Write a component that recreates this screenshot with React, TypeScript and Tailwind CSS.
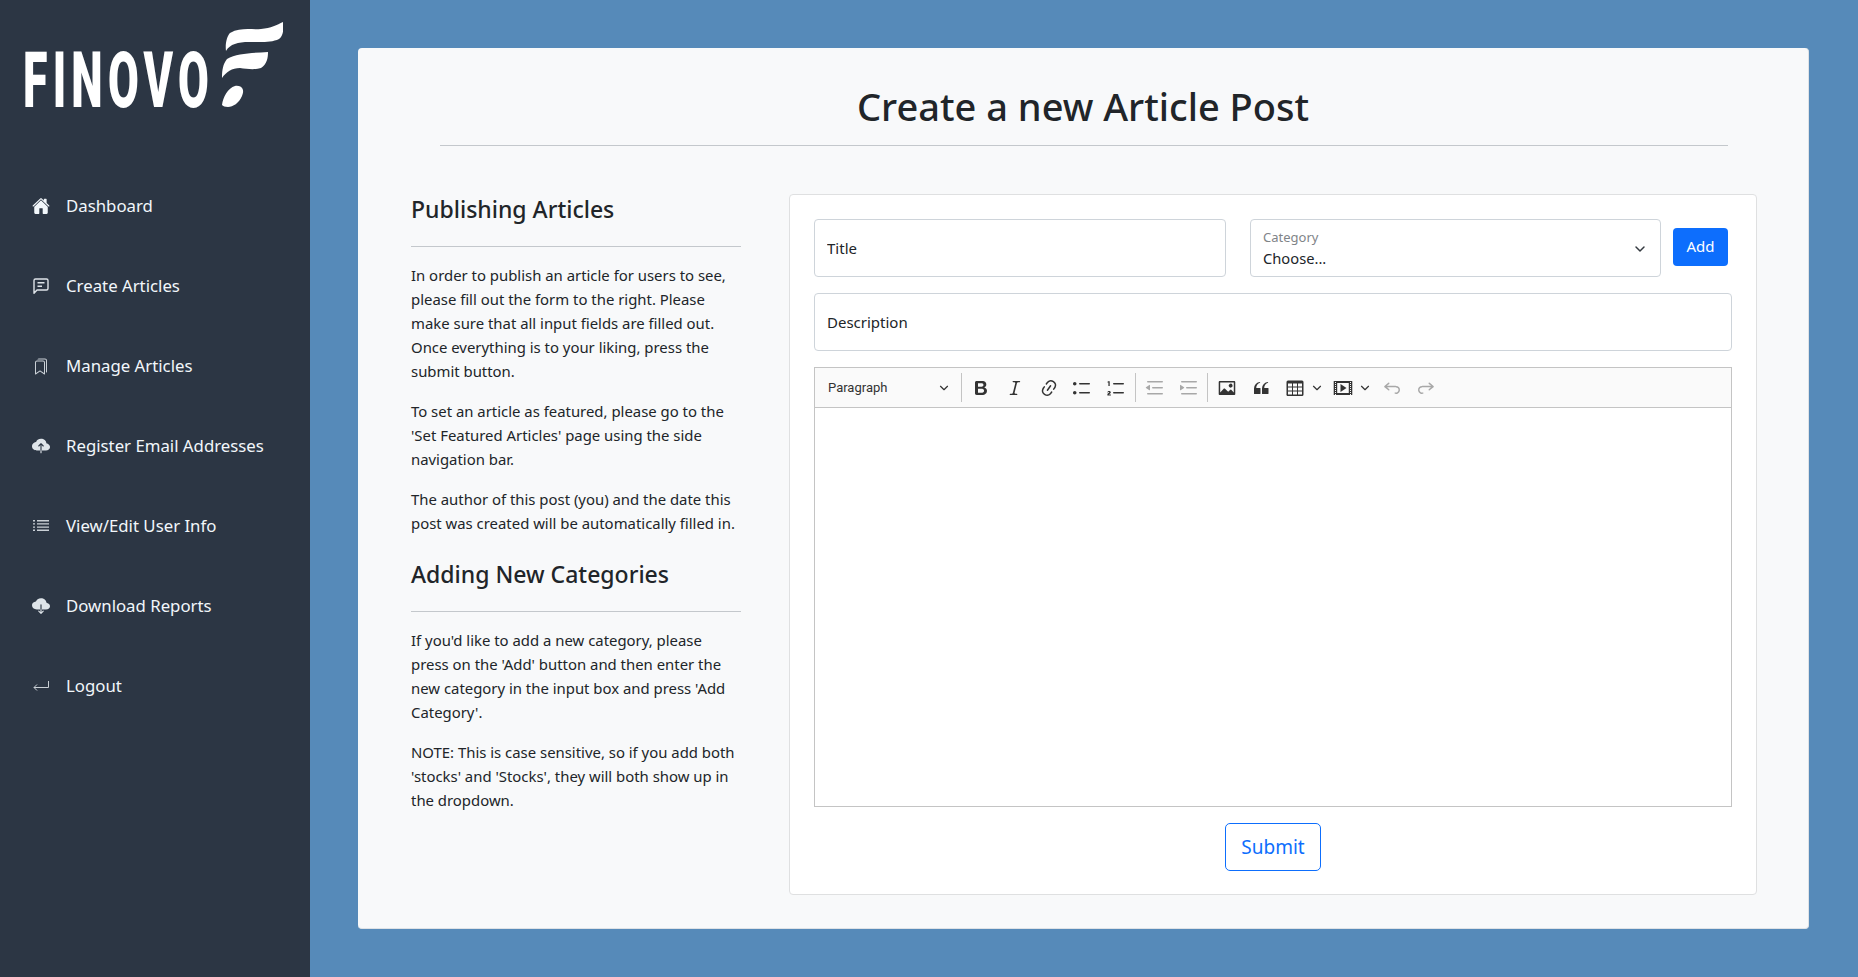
import { ChevronDown } from 'lucide-react';
import { IoHome, IoCloudUpload, IoCloudDownload } from 'react-icons/io5';
import { BsBookmarks } from 'react-icons/bs';

const font = "font-['Noto_Sans','Open_Sans',sans-serif]";

function Glyph({ d, className = '' }: { d: string; className?: string }) {
  return (
    <svg viewBox="0 0 20 20" fill="currentColor" className={`h-5 w-5 ${className}`}>
      <path d={d} />
    </svg>
  );
}

const ICONS = {
  bold: 'M10.187 17H5.773c-.637 0-1.092-.138-1.364-.415-.273-.277-.409-.718-.409-1.323V4.738c0-.617.14-1.062.419-1.332.279-.27.73-.406 1.354-.406h4.68c.69 0 1.288.041 1.793.124.506.083.96.242 1.36.478.341.197.644.447.906.75a3.262 3.262 0 0 1 .808 2.162c0 1.401-.722 2.426-2.167 3.075C15.05 10.175 16 11.315 16 13.01a3.756 3.756 0 0 1-2.296 3.504 6.1 6.1 0 0 1-1.517.377c-.571.073-1.238.11-2 .11zm-.217-6.217H7v4.087h3.069c1.977 0 2.965-.69 2.965-2.072 0-.707-.256-1.22-.768-1.537-.512-.319-1.277-.478-2.296-.478zM7 5.13v3.619h2.606c.729 0 1.292-.067 1.69-.2a1.6 1.6 0 0 0 .91-.765c.165-.267.247-.566.247-.897 0-.707-.26-1.176-.778-1.409-.519-.232-1.31-.348-2.375-.348H7z',
  italic: 'm9.586 14.633.021.004c-.036.335.095.655.393.962.082.083.173.15.274.201h1.474a.6.6 0 1 1 0 1.2H5.304a.6.6 0 0 1 0-1.2h1.15c.474-.07.809-.182 1.005-.334.157-.122.291-.32.404-.597l2.416-9.55a1.053 1.053 0 0 0-.281-.823 1.12 1.12 0 0 0-.442-.296H8.15a.6.6 0 0 1 0-1.2h6.443a.6.6 0 1 1 0 1.2h-1.195c-.376.056-.65.155-.823.296-.215.175-.423.439-.623.79l-2.366 9.347z',
  link: 'm11.077 15 .991-1.416a.75.75 0 1 1 1.229.86l-1.148 1.64a.748.748 0 0 1-.217.206 5.251 5.251 0 0 1-8.503-5.955.741.741 0 0 1 .12-.274l1.147-1.639a.75.75 0 1 1 1.228.86L4.933 10.7l.006.003a3.75 3.75 0 0 0 6.132 4.294l.006.004zm5.494-5.335a.748.748 0 0 1-.12.274l-1.147 1.639a.75.75 0 1 1-1.228-.86l.86-1.23a3.75 3.75 0 0 0-6.144-4.301l-.86 1.229a.75.75 0 0 1-1.229-.86l1.148-1.64a.748.748 0 0 1 .217-.206 5.251 5.251 0 0 1 8.503 5.955zm-4.563-2.532a.75.75 0 0 1 .184 1.045l-3.155 4.505a.75.75 0 1 1-1.229-.86l3.155-4.506a.75.75 0 0 1 1.045-.184z',
  bullet: 'M6 5.75c0 .414.336.75.75.75h9.5a.75.75 0 1 0 0-1.5h-9.5a.75.75 0 0 0-.75.75zm-6 0C0 4.784.777 4 1.75 4c.966 0 1.75.777 1.75 1.75 0 .966-.777 1.75-1.75 1.75C.784 7.5 0 6.723 0 5.75zm6 9c0 .414.336.75.75.75h9.5a.75.75 0 1 0 0-1.5h-9.5a.75.75 0 0 0-.75.75zm-6 0c0-.966.777-1.75 1.75-1.75.966 0 1.75.777 1.75 1.75 0 .966-.777 1.75-1.75 1.75-.966 0-1.75-.777-1.75-1.75z',
  number: 'M6 5.75c0 .414.336.75.75.75h9.5a.75.75 0 1 0 0-1.5h-9.5a.75.75 0 0 0-.75.75zm0 9c0 .414.336.75.75.75h9.5a.75.75 0 1 0 0-1.5h-9.5a.75.75 0 0 0-.75.75zM1.2 3.2h1.5V8H1.4V4.4H.5v-.7c.4 0 .6-.2.7-.5zM.4 17.5v-1c0-.8.5-1.1 1.2-1.5.4-.2.6-.4.6-.7 0-.3-.2-.4-.5-.4-.4 0-.6.2-.6.6H.4c0-1 .7-1.5 1.7-1.5 1.1 0 1.7.6 1.7 1.3 0 .8-.5 1.2-1.2 1.6-.3.2-.5.3-.6.5h1.9v1.1H.4z',
  outdent: 'M2 3.75c0 .414.336.75.75.75h14.5a.75.75 0 1 0 0-1.5H2.75a.75.75 0 0 0-.75.75zm5 6c0 .414.336.75.75.75h9.5a.75.75 0 1 0 0-1.5h-9.5a.75.75 0 0 0-.75.75zM2.75 16.5h14.5a.75.75 0 1 0 0-1.5H2.75a.75.75 0 1 0 0 1.5zm1.618-9.55L.98 9.358a.4.4 0 0 0 .013.661l3.39 2.207A.4.4 0 0 0 5 11.892V7.275a.4.4 0 0 0-.632-.326z',
  indent: 'M2 3.75c0 .414.336.75.75.75h14.5a.75.75 0 1 0 0-1.5H2.75a.75.75 0 0 0-.75.75zm5 6c0 .414.336.75.75.75h9.5a.75.75 0 1 0 0-1.5h-9.5a.75.75 0 0 0-.75.75zM2.75 16.5h14.5a.75.75 0 1 0 0-1.5H2.75a.75.75 0 1 0 0 1.5zM1.632 6.95 5.02 9.358a.4.4 0 0 1-.013.661l-3.39 2.207A.4.4 0 0 1 1 11.892V7.275a.4.4 0 0 1 .632-.326z',
  image: 'M6.91 10.54c.26-.23.64-.21.88.03l3.36 3.14 2.23-2.06a.64.64 0 0 1 .87 0l2.52 2.97V4.5H3.2v10.12l3.71-4.08zm10.27-7.51c.6 0 1.09.47 1.09 1.05v11.84c0 .59-.49 1.06-1.09 1.06H2.79c-.6 0-1.09-.47-1.09-1.06V4.08c0-.58.49-1.05 1.1-1.05h14.38zm-5.22 5.56a1.96 1.96 0 1 1 3.4-1.96 1.96 1.96 0 0 1-3.4 1.96z',
  quote: 'M3 10.423a6.5 6.5 0 0 1 6.056-6.408l.038.67C6.448 5.423 5.354 7.663 5.22 10H9c.552 0 .5.432.5.986v4.511c0 .554-.448.503-1 .503h-5c-.552 0-.5-.449-.5-1.003v-4.574zm8 0a6.5 6.5 0 0 1 6.056-6.408l.038.67c-2.646.739-3.74 2.979-3.873 5.315H17c.552 0 .5.432.5.986v4.511c0 .554-.448.503-1 .503h-5c-.552 0-.5-.449-.5-1.003v-4.574z',
  table: 'M3 5.5v3h4v-3H3zm0 4v3h4v-3H3zm0 4v3h4v-3H3zm5 3h4v-3H8v3zm5 0h4v-3h-4v3zm4-4v-3h-4v3h4zm0-4v-3h-4v3h4zm1.5 8a1.5 1.5 0 0 1-1.5 1.5H3A1.5 1.5 0 0 1 1.5 16V4A1.5 1.5 0 0 1 3 2.5h14A1.5 1.5 0 0 1 18.5 4v12zM8 8.5h4v-3H8v3zm0 4h4v-3H8v3z',
  media: 'M18.68 3.03c.6 0 .59-.03.59.55v12.84c0 .59.01.56-.59.56H1.29c-.6 0-.59.03-.59-.56V3.58c0-.58-.01-.55.6-.55h17.38zM15.77 15V5H4.2v10h11.57zM2 4v1h1V4H2zm0 2v1h1V6H2zm0 2v1h1V8H2zm0 2v1h1v-1H2zm0 2v1h1v-1H2zm0 2v1h1v-1H2zm0 2v1h1v-1H2zM17 4v1h1V4h-1zm0 2v1h1V6h-1zm0 2v1h1V8h-1zm0 2v1h1v-1h-1zm0 2v1h1v-1h-1zm0 2v1h1v-1h-1zm0 2v1h1v-1h-1zM7.5 6l6 4-6 4V6z',
  undo: 'm5.042 9.367 2.189 1.837a.75.75 0 0 1-.965 1.149l-3.788-3.18a.747.747 0 0 1-.21-.284.75.75 0 0 1 .17-.945L6.23 4.762a.75.75 0 1 1 .964 1.15L4.863 7.866h8.917A.75.75 0 0 1 14 7.9a4 4 0 1 1-1.477 7.718l.344-1.489a2.5 2.5 0 1 0 1.094-4.73l.008-.032H5.042z',
  redo: 'm14.958 9.367-2.189 1.837a.75.75 0 0 0 .965 1.149l3.788-3.18a.747.747 0 0 0 .21-.284.75.75 0 0 0-.17-.945L13.77 4.762a.75.75 0 1 0-.964 1.15l2.331 1.955H6.22A.75.75 0 0 0 6 7.9a4 4 0 1 0 1.477 7.718l-.344-1.489A2.5 2.5 0 1 1 6.039 9.4l-.008-.032h8.927z',
};

function Logo() {
  return (
    <div className="flex h-[133px] items-start pl-[25px] pt-[22px]">
      <div className="relative h-[90px] w-[262px]">
        <span className="absolute left-[-2px] top-[14px] origin-left scale-x-[0.58] whitespace-nowrap font-['Roboto',sans-serif] text-[77px] font-black leading-[90px] tracking-[9px] text-white">
          FINOVO
        </span>
        <svg viewBox="0 0 62 90" fill="white" className="absolute left-[196px] top-0 h-[90px] w-[62px]">
          <path d="M5 29C4 22 6 14 9 11 20 5 30 8 40 7 50 6 56 3 62 0 63 8 62 14 58 17 50 21 38 20 28 20 17 20 9 22 5 29Z" />
          <path d="M1 56C1 48 2 42 6 37 16 31 32 31 47 30 47 36 46 42 40 46 34 48 26 47 19 46 11 46 5 50 1 56Z" />
          <path d="M1 83C2 75 7 66 14 64 21 63 24 68 21 74 18 81 12 85 7 85 4 85 2 84 1 83Z" />
        </svg>
      </div>
    </div>
  );
}

function ListIcon() {
  return (
    <svg viewBox="0 0 16 14" fill="currentColor" className="h-[14px] w-4 opacity-80">
      <path d="M4 1h12v1.4H4zM4 4.2h12v1.4H4zM4 7.4h12v1.4H4zM4 10.6h12V12H4zM0 1h2v1.4H0zM0 4.2h2v1.4H0zM0 7.4h2v1.4H0zM0 10.6h2V12H0z" />
    </svg>
  );
}

function ChatIcon() {
  return (
    <svg viewBox="0 0 16 16" fill="none" stroke="currentColor" className="h-4 w-4 opacity-90">
      <path d="M1 15.2V2.5A1.5 1.5 0 0 1 2.5 1h11A1.5 1.5 0 0 1 15 2.5v8a1.5 1.5 0 0 1-1.5 1.5H4z" strokeWidth="1.4" strokeLinejoin="round" />
      <path d="M4.5 4.7h7M4.5 8.3h4.5" strokeWidth="1.5" />
    </svg>
  );
}

function ReturnIcon() {
  return (
    <svg viewBox="0 0 16 10" fill="none" stroke="currentColor" strokeWidth="1" className="h-[10px] w-4 opacity-80">
      <path d="M15.5 0v6.5H1M4 3.5 1 6.5l3 3" />
    </svg>
  );
}

const NAV = [
  { label: 'Dashboard', icon: <IoHome className="-ml-[1px] h-[18px] w-[18px]" /> },
  { label: 'Create Articles', icon: <ChatIcon /> },
  { label: 'Manage Articles', icon: <BsBookmarks className="h-[17px] w-4 opacity-80" /> },
  { label: 'Register Email Addresses', icon: <IoCloudUpload className="-ml-[1px] h-[18px] w-[18px] opacity-90" /> },
  { label: 'View/Edit User Info', icon: <ListIcon /> },
  { label: 'Download Reports', icon: <IoCloudDownload className="-ml-[1px] h-[18px] w-[18px] opacity-90" /> },
  { label: 'Logout', icon: <ReturnIcon /> },
];

function Sidebar() {
  return (
    <aside className="w-[310px] shrink-0 bg-[#2c3644]">
      <Logo />
      <nav className="mt-[61px] flex flex-col gap-[56px] pl-[32px]">
        {NAV.map((item) => (
          <a key={item.label} className="flex h-6 items-center text-[16.8px] leading-6 text-[#f2f7fb]">
            <span className="flex w-[34px] shrink-0 items-center pl-[1px]">{item.icon}</span>
            {item.label}
          </a>
        ))}
      </nav>
    </aside>
  );
}

function ToolButton({ d, off, caret }: { d: string; off?: boolean; caret?: boolean }) {
  return (
    <span className={`flex h-[40px] items-center ${caret ? 'w-[48.5px] pl-[7px]' : 'w-[34px] justify-center'} ${off ? 'text-[#a8a8a8]' : 'text-[#333]'}`}>
      <Glyph d={d} />
      {caret && <ChevronDown className="ml-[5px] h-[14px] w-[14px]" strokeWidth={2} />}
    </span>
  );
}

function Divider() {
  return <span className="mx-[1.5px] h-[29px] w-px bg-[#c4c4c4]" />;
}

function Editor() {
  return (
    <div className="flex h-[440px] flex-col border border-[#c4c4c4]">
      <div className="flex h-[40px] items-center border-b border-[#c4c4c4] bg-[#fafafa] text-[#333]">
        <span className="flex w-[144.5px] items-center justify-between pl-[13px] pr-[9px] font-['Roboto',sans-serif] text-[13px]">
          Paragraph
          <ChevronDown className="h-[14px] w-[14px]" strokeWidth={2} />
        </span>
        <Divider />
        <ToolButton d={ICONS.bold} />
        <ToolButton d={ICONS.italic} />
        <ToolButton d={ICONS.link} />
        <ToolButton d={ICONS.bullet} />
        <ToolButton d={ICONS.number} />
        <Divider />
        <ToolButton d={ICONS.outdent} off />
        <ToolButton d={ICONS.indent} off />
        <Divider />
        <ToolButton d={ICONS.image} />
        <ToolButton d={ICONS.quote} />
        <ToolButton d={ICONS.table} caret />
        <ToolButton d={ICONS.media} caret />
        <ToolButton d={ICONS.undo} off />
        <ToolButton d={ICONS.redo} off />
      </div>
      <div className="flex-1 bg-white" />
    </div>
  );
}

function Guide() {
  return (
    <section className="w-[330px] shrink-0 pt-[1px] text-[14.9px] leading-6 text-[#212529]">
      <h4 className="pb-[22px] text-[23px] font-medium leading-[29px]">Publishing Articles</h4>
      <hr className="mb-[16px] border-[#c4c8cc]" />
      <p className="mb-[16px]">
        In order to publish an article for users to see,<br />
        please fill out the form to the right. Please<br />
        make sure that all input fields are filled out.<br />
        Once everything is to your liking, press the<br />
        submit button.
      </p>
      <p className="mb-[16px]">
        To set an article as featured, please go to the<br />
        'Set Featured Articles' page using the side<br />
        navigation bar.
      </p>
      <p className="mb-[25px]">
        The author of this post (you) and the date this<br />
        post was created will be automatically filled in.
      </p>
      <h4 className="pb-[22px] text-[23px] font-medium leading-[29px]">Adding New Categories</h4>
      <hr className="mb-[16px] border-[#c4c8cc]" />
      <p className="mb-[16px]">
        If you'd like to add a new category, please<br />
        press on the 'Add' button and then enter the<br />
        new category in the input box and press 'Add<br />
        Category'.
      </p>
      <p>
        NOTE: This is case sensitive, so if you add both<br />
        'stocks' and 'Stocks', they will both show up in<br />
        the dropdown.
      </p>
    </section>
  );
}

function ArticleForm() {
  return (
    <section className="flex h-[701px] flex-1 flex-col rounded-[4px] border border-[#dfe0e1] bg-white px-[24px] pt-[24px]">
      <div className="flex items-center">
        <input
          placeholder="Title"
          className="h-[58px] w-[412px] rounded-[4px] border border-[#ced4da] bg-white px-3 text-[15px] outline-none placeholder:text-[#212529]"
        />
        <div className="relative ml-[24px] h-[58px] w-[411px] rounded-[4px] border border-[#ced4da] bg-white pl-3 pt-[9px]">
          <div className="text-[13px] leading-[16px] text-[#7f8488]">Category</div>
          <div className="mt-[1px] text-[14.7px] leading-[24px] text-[#212529]">Choose...</div>
          <ChevronDown className="absolute right-[12px] top-[21px] h-4 w-4 text-[#343a40]" strokeWidth={2.2} />
        </div>
        <button className="ml-[12px] mb-[3px] h-[38px] w-[55px] rounded-[4px] bg-[#0d6efd] text-[15px] text-white">Add</button>
      </div>
      <input
        placeholder="Description"
        className="mt-[16px] h-[58px] w-full shrink-0 rounded-[4px] border border-[#ced4da] bg-white px-3 text-[15px] outline-none placeholder:text-[#212529]"
      />
      <div className="mt-[16px]">
        <Editor />
      </div>
      <button className="mx-auto mt-[16px] h-[48px] w-[96px] rounded-[5px] border border-[#0d6efd] pt-[1px] text-[19px] text-[#0d6efd]">Submit</button>
    </section>
  );
}

export default function App() {
  return (
    <div className={`flex h-[977px] w-[1858px] overflow-hidden bg-[#568ab9] ${font}`}>
      <Sidebar />
      <main className="flex-1 py-[48px] pl-[48px] pr-[49px]">
        <div className="h-[881px] rounded-[4px] border-r border-b border-[#dee2e6] bg-[#f8f9fa]">
          <h1 className="pt-[34px] text-center text-[38px] font-medium leading-[48px] text-[#212529]">Create a new Article Post</h1>
          <hr className="ml-[82px] mr-[80px] mt-[15px] border-[#c4c8cc]" />
          <div className="mt-[48px] flex gap-[48px] pl-[53px] pr-[51px]">
            <Guide />
            <ArticleForm />
          </div>
        </div>
      </main>
    </div>
  );
}
